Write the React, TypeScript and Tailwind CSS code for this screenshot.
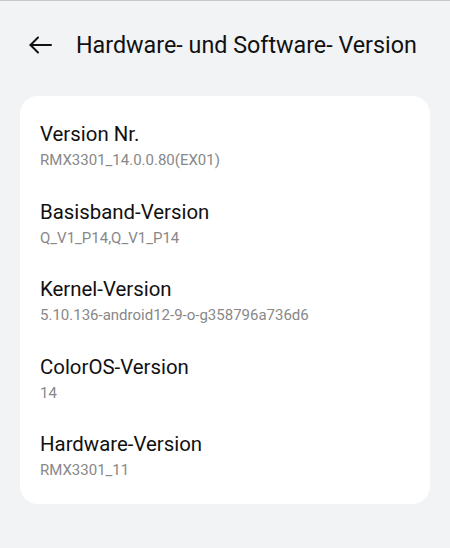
import React from "react";

const rows = [
  { t: "Version Nr.", v: "RMX3301_14.0.0.80(EX01)" },
  { t: "Basisband-Version", v: "Q_V1_P14,Q_V1_P14" },
  { t: "Kernel-Version", v: "5.10.136-android12-9-o-g358796a736d6" },
  { t: "ColorOS-Version", v: "14" },
  { t: "Hardware-Version", v: "RMX3301_11" },
];

export default function App() {
  return (
    <div
      className="w-[450px] h-[548px] bg-[#f2f3f5] border-t border-[#c9c9c9] overflow-hidden"
      style={{ fontFamily: "Roboto, 'Noto Sans', sans-serif" }}
    >
      <div className="flex items-center h-[88px] pl-[29px]">
        <svg width="23" height="22" viewBox="0 0 23 22" fill="none" stroke="#111" strokeWidth="2" strokeLinecap="round" strokeLinejoin="round">
          <path d="M22 11H1.5" />
          <path d="M9 3.5L1.5 11L9 18.5" />
        </svg>
        <span className="ml-[24px] text-[23.3px] leading-[30px] text-[#111]">Hardware- und Software- Version</span>
      </div>
      <div className="mx-[20px] mt-[7px] bg-white rounded-[18px] pt-[24px] pb-[22px] px-[20px] flex flex-col gap-[25.5px]">
        {rows.map((r) => (
          <div key={r.t} className="flex flex-col">
            <span className="text-[20.4px] leading-[28px] text-[#111]">{r.t}</span>
            <span className="text-[15px] leading-[24px] text-[#888888]">{r.v}</span>
          </div>
        ))}
      </div>
    </div>
  );
}
